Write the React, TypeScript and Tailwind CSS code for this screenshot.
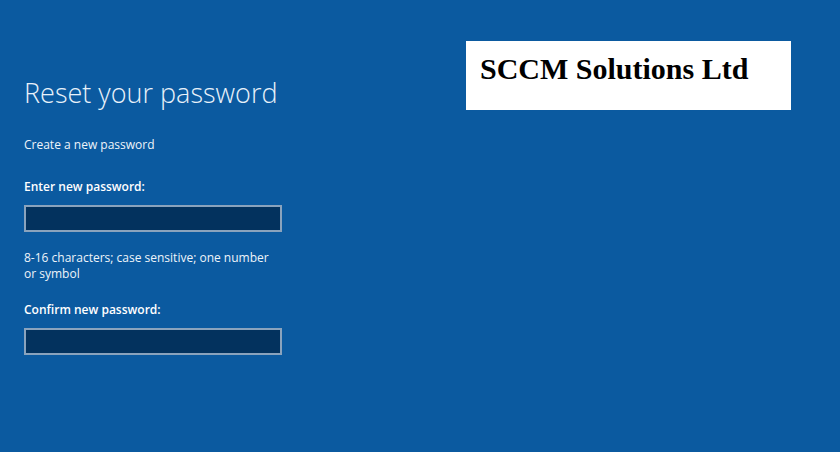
import React from "react";

export default function App() {
  return (
    <main className="relative h-[452px] w-[840px] overflow-hidden bg-[#0b5aa0] font-['Open_Sans','Noto_Sans',sans-serif] text-white">
      <section className="flex justify-between pl-6 pr-[49px]">
        <div className="w-[258px] pt-[75px]">
          <h1 className="whitespace-nowrap text-[27px] font-light leading-[36px] text-[#e8f1fa]">
            Reset your password
          </h1>
          <p className="mt-[26px] text-[12px] leading-[16px] text-[#eef4fa]">Create a new password</p>

          <label className="mt-[26px] block text-[12px] font-semibold leading-[16px]">Enter new password:</label>
          <input
            type="password"
            className="mt-[10px] block h-[27px] w-[258px] border-2 border-[#8aa3bd] bg-[#03325e] outline-none"
          />

          <p className="mt-[18px] text-[12px] leading-[16px] text-[#eef4fa]">
            8-16 characters; case sensitive; one number or symbol
          </p>

          <label className="mt-[20px] block text-[12px] font-semibold leading-[16px]">Confirm new password:</label>
          <input
            type="password"
            className="mt-[10px] block h-[27px] w-[258px] border-2 border-[#8aa3bd] bg-[#03325e] outline-none"
          />
        </div>

        <div className="mt-[41px] h-[69px] w-[325px] self-start bg-white pl-[14px] pt-[10px]">
          <span className="whitespace-nowrap font-['Liberation_Serif',serif] text-[30px] font-bold leading-[36px] text-black">
            SCCM Solutions Ltd
          </span>
        </div>
      </section>
    </main>
  );
}
